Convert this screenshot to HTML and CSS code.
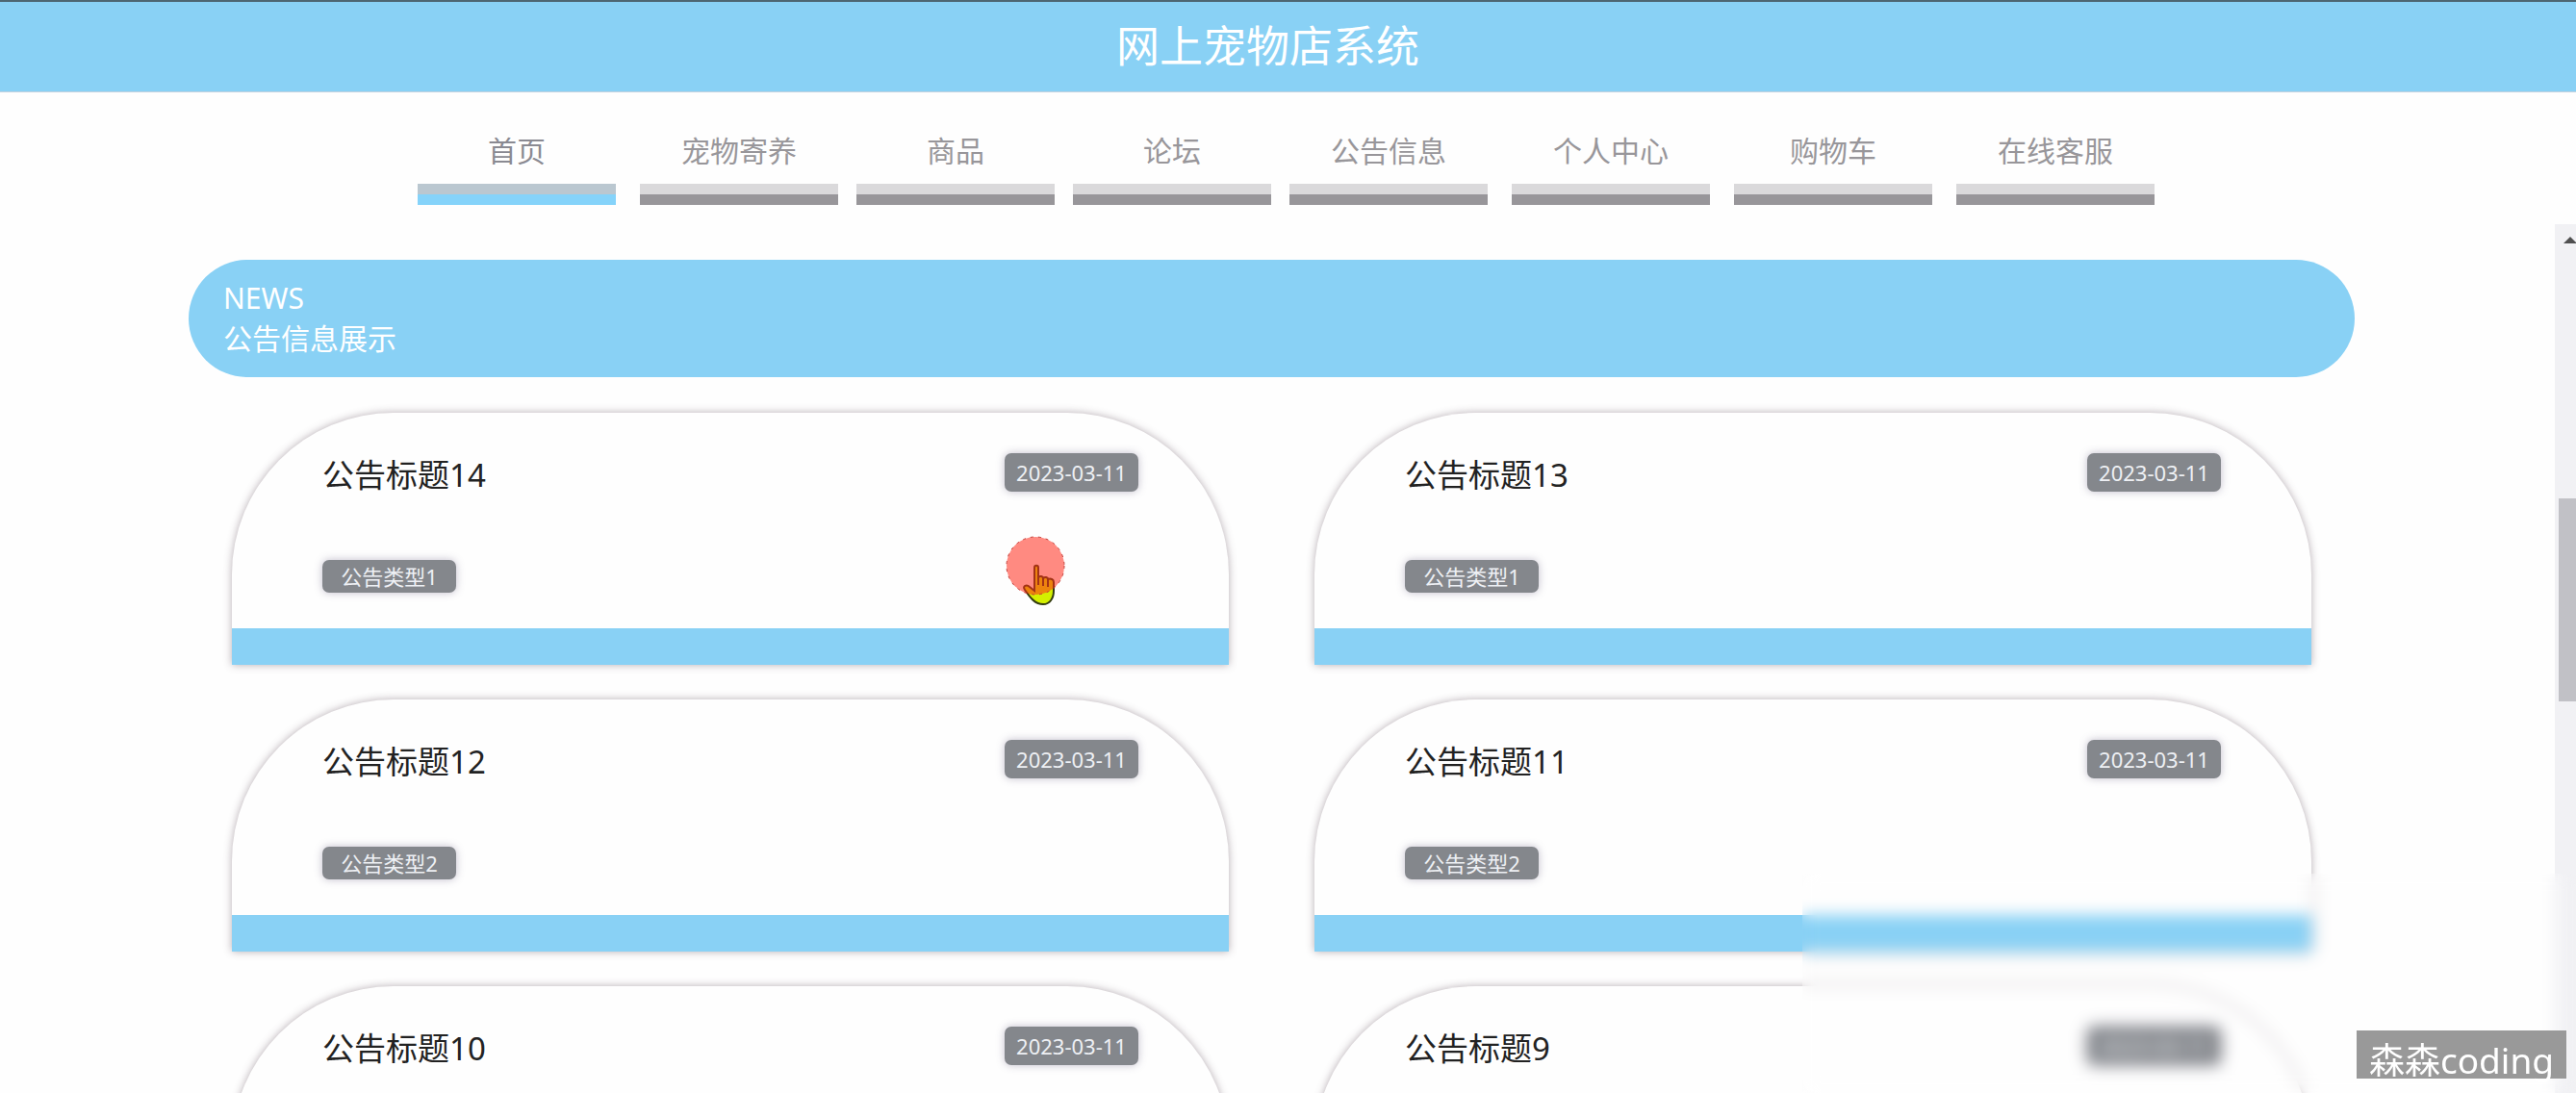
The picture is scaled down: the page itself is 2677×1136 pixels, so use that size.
FILE: index.html
```html
<!DOCTYPE html>
<html lang="zh-CN">
<head>
<meta charset="utf-8">
<title>网上宠物店系统</title>
<link rel="stylesheet" href="styles.css">
</head>
<body>
<header class="topbar"><h1 class="topbar-title">网上宠物店系统</h1></header>
<nav class="nav">
  <a class="nav-item nav-item--active" href="#">首页</a>
  <a class="nav-item nav-item--spaced" href="#">宠物寄养</a>
  <a class="nav-item" href="#">商品</a>
  <a class="nav-item" href="#">论坛</a>
  <a class="nav-item" href="#">公告信息</a>
  <a class="nav-item nav-item--spaced" href="#">个人中心</a>
  <a class="nav-item nav-item--spaced" href="#">购物车</a>
  <a class="nav-item nav-item--spaced" href="#">在线客服</a>
</nav>
<div class="viewport">
  <main class="content">
    <section class="banner">
      <div>NEWS</div>
      <h2 class="banner-title">公告信息展示</h2>
    </section>
    <section class="cards">
      <article class="card">
        <div class="card-head"><h3 class="card-title">公告标题14</h3><time class="badge badge--date">2023-03-11</time></div>
        <span class="badge badge--type">公告类型1</span>
      </article>
      <article class="card">
        <div class="card-head"><h3 class="card-title">公告标题13</h3><time class="badge badge--date">2023-03-11</time></div>
        <span class="badge badge--type">公告类型1</span>
      </article>
      <article class="card">
        <div class="card-head"><h3 class="card-title">公告标题12</h3><time class="badge badge--date">2023-03-11</time></div>
        <span class="badge badge--type">公告类型2</span>
      </article>
      <article class="card">
        <div class="card-head"><h3 class="card-title">公告标题11</h3><time class="badge badge--date">2023-03-11</time></div>
        <span class="badge badge--type">公告类型2</span>
      </article>
      <article class="card">
        <div class="card-head"><h3 class="card-title">公告标题10</h3><time class="badge badge--date">2023-03-11</time></div>
      </article>
      <article class="card">
        <div class="card-head"><h3 class="card-title">公告标题9</h3><time class="badge badge--date">2023-03-11</time></div>
      </article>
    </section>
  </main>
  <div class="scrollbar" aria-hidden="true">
    <div class="scrollbar-arrow"></div>
    <div class="scrollbar-thumb"></div>
  </div>
</div>
<svg class="pointer" width="64" height="76" viewBox="0 0 64 76" aria-hidden="true">
  <path d="M31 34c0-3 4-3 4 0v10c2-2 5-1 5 1 2-2 5-1 5 1 3-1 6 0 6 3v9c0 8-4 14-11 14-8 0-13-6-19-15-3-4 2-6 5-3l5 4z" fill="#d4f000" stroke="#333c10" stroke-width="2"/>
  <path d="M35 44v8M40 45v8M45 46v8" fill="none" stroke="#333c10" stroke-width="2"/>
  <circle cx="32" cy="32" r="30" fill="#ff2a1a" fill-opacity=".55"/>
  <circle cx="32" cy="32" r="30" fill="none" stroke="#c23a34" stroke-width="1" stroke-dasharray="3 5"/>
</svg>
<div class="haze"></div>
<div class="watermark">森森coding</div>
</body>
</html>
```
FILE: styles.css
```css
* { box-sizing: border-box; }
body {
  margin: 0;
  height: 100vh;
  overflow: hidden;
  display: flex;
  flex-direction: column;
  background: #fefefe;
  color: #222;
  font-family: "Noto Sans", "Noto Sans CJK SC", sans-serif;
  font-size: 30px;
}
h1, h2, h3 { margin: 0; font-weight: 400; }
.topbar {
  flex: none;
  height: 96px;
  padding-right: 42px;
  border-top: 2px solid #4d6672;
  border-bottom: 1px solid #c3d3e0;
  background: #89d1f5;
  text-align: center;
}
.topbar-title { color: #fff; font-size: 45px; line-height: 92px; }
.nav {
  flex: none;
  display: flex;
  justify-content: center;
  gap: 19px;
  height: 137px;
  padding: 40px 4px 0 0;
}
.nav-item {
  width: 206px;
  height: 77px;
  border-bottom: 11px solid #98969a;
  background: linear-gradient(#dad9db, #dad9db) bottom / 100% 11px no-repeat;
  color: #98969a;
  line-height: 42px;
  text-align: center;
  text-decoration: none;
}
.nav-item--spaced { margin-left: 6px; }
.nav-item--active {
  border-bottom-color: #85d3fa;
  background-image: linear-gradient(#bac7d0, #bac7d0);
  color: #8a8a92;
}
.viewport { flex: 1; min-height: 0; display: flex; }
.content { flex: 1; min-width: 0; padding: 37px 208px 0 196px; overflow: hidden; }
.banner {
  height: 122px;
  padding: 19px 36px;
  border-radius: 61px;
  background: #89d1f5;
  color: #fff;
  line-height: 42px;
}
.banner-title { font-size: 30px; }
.cards {
  display: grid;
  grid-template-columns: 1fr 1fr;
  gap: 36px 89px;
  padding: 37px 45px 0;
}
.card {
  height: 262px;
  padding: 42px 94px 0;
  border-bottom: 38px solid #89d1f5;
  border-radius: 168px 168px 0 0;
  background: #fefefe;
  box-shadow: 0 0 9px rgba(80, 60, 75, .42);
}
.card-head { display: flex; justify-content: space-between; align-items: flex-start; }
.card-title { font-size: 33px; line-height: 46px; color: #222; }
.badge {
  display: block;
  width: 139px;
  border-radius: 7px;
  background: #84878c;
  box-shadow: 0 0 8px rgba(80, 70, 110, .35);
  color: #eef0f4;
  font-size: 22px;
  text-align: center;
}
.badge--date { height: 40px; line-height: 40px; }
.badge--type { height: 34px; margin-top: 65px; line-height: 34px; }
.scrollbar {
  flex: none;
  width: 22px;
  padding: 13px 0 0 4px;
  background: #f1f1f4;
}
.scrollbar-arrow {
  width: 14px;
  height: 7px;
  margin-left: 5px;
  background: #505050;
  clip-path: polygon(50% 0, 100% 100%, 0 100%);
}
.scrollbar-thumb { height: 211px; margin-top: 265px; background: #c1c1c6; }
.pointer { position: absolute; left: 1044px; top: 556px; }
.haze {
  position: absolute;
  right: 0;
  bottom: 0;
  width: 804px;
  height: 228px;
  backdrop-filter: blur(8px);
}
.watermark {
  position: absolute;
  right: 10px;
  bottom: 15px;
  width: 218px;
  height: 50px;
  background: #999;
  color: #fff;
  font-size: 37px;
  line-height: 62px;
  text-align: center;
}
```
